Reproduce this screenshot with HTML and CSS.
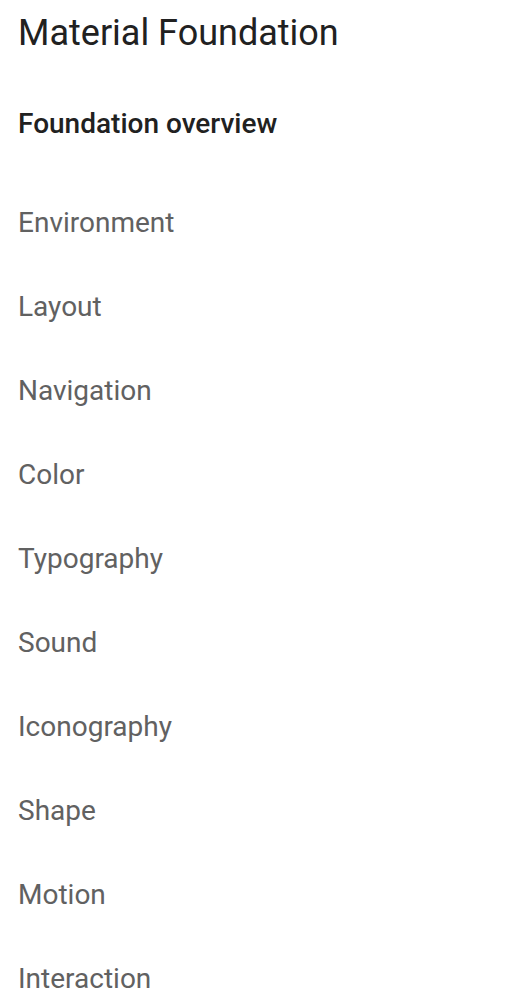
FILE: index.html
```html
<!DOCTYPE html>
<html lang="en">
<head>
    <meta charset="UTF-8">
    <title>Material Foundation</title>
    <meta name="viewport" content="width=device-width, initial-scale=1.0">
    <link rel="stylesheet" href="styles.css">
</head>
<body>
    <nav class="side-nav">
        <h1 class="nav-title">Material Foundation</h1>
        <a class="nav-item active" href="#">Foundation overview</a>
        <ul class="nav-list">
            <li><a class="nav-item" href="#">Environment</a></li>
            <li><a class="nav-item" href="#">Layout</a></li>
            <li><a class="nav-item" href="#">Navigation</a></li>
            <li><a class="nav-item" href="#">Color</a></li>
            <li><a class="nav-item" href="#">Typography</a></li>
            <li><a class="nav-item" href="#">Sound</a></li>
            <li><a class="nav-item" href="#">Iconography</a></li>
            <li><a class="nav-item" href="#">Shape</a></li>
            <li><a class="nav-item" href="#">Motion</a></li>
            <li><a class="nav-item" href="#">Interaction</a></li>
        </ul>
    </nav>
</body>
</html>
```

FILE: styles.css
```css
* {
    margin: 0;
    padding: 0;
    box-sizing: border-box;
}

body {
    font-family: Roboto, "Noto Sans", sans-serif;
    background-color: #ffffff;
    overflow: hidden;
}

.side-nav {
    padding: 0 18px;
    display: flex;
    flex-direction: column;
}

.nav-title {
    font-size: 36px;
    font-weight: 400;
    color: #212121;
    line-height: 66px;
}

.nav-list {
    list-style: none;
    display: flex;
    flex-direction: column;
    margin-top: 15px;
}

.nav-item {
    display: block;
    text-decoration: none;
    font-size: 28px;
    color: #616161;
    line-height: 84px;
}

.nav-item.active {
    font-weight: 500;
    color: #212121;
    margin-top: 16px;
}
```
